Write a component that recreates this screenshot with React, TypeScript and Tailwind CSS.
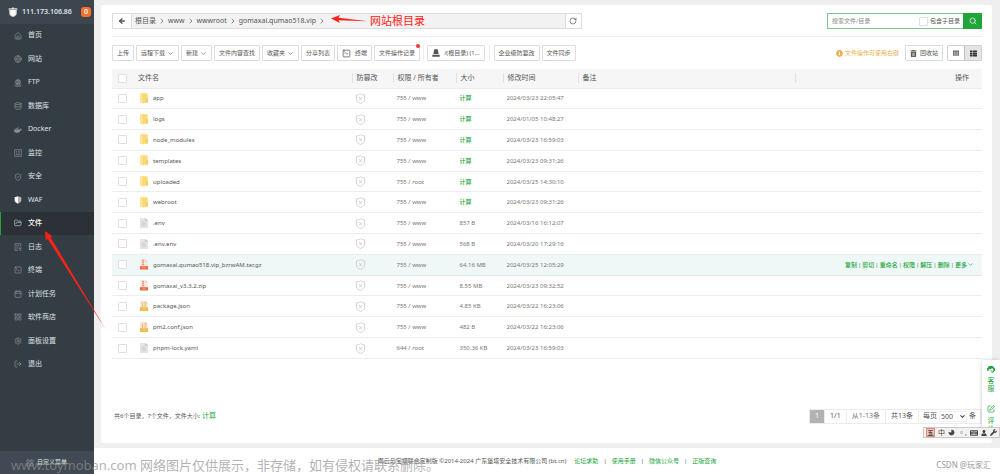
import React, { useState } from "react";
import clsx from "clsx";
import {
  ArrowLeft,
  Calendar,
  ChevronDown,
  ChevronRight,
  Database,
  FolderOpen,
  Globe,
  Home,
  LayoutGrid,
  LogOut,
  RotateCw,
  Search,
  Settings,
  ShieldCheck,
  SquarePen,
  SquareTerminal,
  Moon,
} from "lucide-react";
import {
  FaDocker,
  FaInfoCircle,
  FaKeyboard,
  FaTh,
  FaThList,
  FaTrashAlt,
  FaUser,
  FaWrench,
} from "react-icons/fa";

type FileKind = "folder" | "text" | "archive" | "json";

interface FileRow {
  name: string;
  kind: FileKind;
  owner: string;
  size?: string;
  time: string;
  active?: boolean;
}

const files: FileRow[] = [
  { name: "app", kind: "folder", owner: "755 / www", time: "2024/03/23 22:05:47" },
  { name: "logs", kind: "folder", owner: "755 / www", time: "2024/01/05 10:48:27" },
  { name: "node_modules", kind: "folder", owner: "755 / www", time: "2024/03/23 16:59:03" },
  { name: "templates", kind: "folder", owner: "755 / www", time: "2024/03/23 09:31:26" },
  { name: "uploaded", kind: "folder", owner: "755 / root", time: "2024/03/25 14:30:10" },
  { name: "webroot", kind: "folder", owner: "755 / www", time: "2024/03/23 09:31:26" },
  { name: ".env", kind: "text", owner: "755 / www", size: "857 B", time: "2024/03/16 16:12:07" },
  { name: ".env.env", kind: "text", owner: "755 / www", size: "568 B", time: "2024/03/20 17:29:16" },
  {
    name: "gomaxai.qumao518.vip_bzrwAM.tar.gz",
    kind: "archive",
    owner: "755 / www",
    size: "64.16 MB",
    time: "2024/03/25 12:05:29",
    active: true,
  },
  { name: "gomaxai_v3.3.2.zip", kind: "archive", owner: "755 / www", size: "8.55 MB", time: "2024/03/23 09:32:52" },
  { name: "package.json", kind: "json", owner: "755 / www", size: "4.85 KB", time: "2024/03/22 16:23:06" },
  { name: "pm2.conf.json", kind: "json", owner: "755 / www", size: "482 B", time: "2024/03/22 16:23:06" },
  { name: "pnpm-lock.yaml", kind: "text", owner: "644 / root", size: "350.36 KB", time: "2024/03/23 16:59:03" },
];

/* ---------- Icons ---------- */
const FtpIcon = () => (
  <svg viewBox="0 0 24 24" className="size-2" fill="none" stroke="currentColor" strokeWidth="2">
    <circle cx="12" cy="9" r="7.500" />
    <path d="M12 1v16M4 9h16M6 5h12M6 13h12M1 18h22M4 22h16" />
  </svg>
);

const MonitorIcon = () => (
  <svg viewBox="0 0 24 24" className="size-2" fill="none" stroke="currentColor" strokeWidth="2">
    <path d="M2 2h20v20H2zM6 7h3M12 7h6M6 12h3M12 12h6M6 17h12" />
  </svg>
);

const WafIcon = () => (
  <svg viewBox="0 0 24 24" className="size-2">
    <path d="M12 1 2 4v9c0 5 5 8 10 10z" fill="#fff" />
    <path d="m12 1 10 3v9c0 5-5 8-10 10z" fill="#aeb2b5" />
  </svg>
);

const LogIcon = () => (
  <svg viewBox="0 0 24 24" className="size-2" fill="none" stroke="currentColor" strokeWidth="2">
    <path d="M20 11V2H3v20h9M7 7h9M7 12h6M7 17h4M14 15h8M14 18h8M17 22h5" />
  </svg>
);

const LogoIcon = () => (
  <svg viewBox="0 0 24 24" className="size-[10px] shrink-0">
    <path d="M12 0 9 3 2 3 1 6l2 2v7c0 5 5 8 9 9 4-1 9-4 9-9V8l2-2-1-3-7 0z" fill="#d7dadc" />
    <path d="M12 6 6 8v7c0 3 3 5 6 6 3-1 6-3 6-6V8z" fill="#fff" />
    <path d="M2 6h20" stroke="#7d848a" strokeWidth="1.5" />
  </svg>
);

const GuardIcon = () => (
  <svg viewBox="0 0 24 24" className="size-[11px]" fill="none" stroke="#c8c8c8" strokeWidth="1.8">
    <path d="M12 1.500C9.500 3.500 6 4 3 4v9c0 5 3.500 7.500 9 10 5.500-2.500 9-5 9-10V4c-3 0-6.500-.5-9-2.500z" />
    <path d="m9 9 6 7m0-7-6 7" />
  </svg>
);

const DiskIcon = () => (
  <svg viewBox="0 0 24 24" className="mr-[2px] size-2" fill="currentColor">
    <path d="M7 1h10l3 14H4zM1 17h22v6H1z" />
  </svg>
);

const ServiceIcon = () => (
  <svg viewBox="0 0 24 24" className="mb-1 size-2 shrink-0" fill="currentColor">
    <path d="M12 2C6 2 2 6 2 10H0v7h5v-4c5 0 9-2 11-5 1 3 2 5 3 5v4c-1 2-3 3-6 3v3c5 0 8-2 9-6h2v-7h-2c0-4-4-8-10-8z" />
    <path d="M8 16c2 2 6 2 8 0" fill="none" stroke="currentColor" strokeWidth="2" />
  </svg>
);

const FileIcon = ({ kind }: { kind: FileKind }) => {
  if (kind === "folder") {
    return (
      <svg viewBox="0 0 24 33" className="h-[11px] w-2 shrink-0">
        <path d="M1 1h20a2 2 0 0 1 2 2v26H1z" fill="#f9d978" />
        <path d="M1 1l9 4v27L1 28z" fill="#ffe493" />
        <path d="M10 5v27" stroke="#efc04d" />
        <path d="M19 15h4v14h-4z" fill="#f3c653" />
      </svg>
    );
  }
  if (kind === "text") {
    return (
      <svg viewBox="0 0 24 30" className="h-[10px] w-2 shrink-0">
        <path d="M0 0h16l8 8v22H0z" fill="#e4e4e4" />
        <path d="M16 0v8h8z" fill="#bdbdbd" />
        <path d="M5 12h12M5 17h13M5 22h13" stroke="#c4c4c4" strokeWidth="2" />
      </svg>
    );
  }
  if (kind === "archive") {
    return (
      <svg viewBox="0 0 24 32" className="h-[11px] w-2 shrink-0">
        <path d="M2 0h14l7 7v14H2z" fill="#f3e6e1" />
        <path d="M16 0v7h7z" fill="#e8c9bf" />
        <path d="M9 2v18" stroke="#ee7350" strokeWidth="4" strokeDasharray="4 2" />
        <path d="M0 21h24v10H0z" fill="#f0683f" />
        <path d="M7 26h10" stroke="#f59a7d" strokeWidth="3" />
      </svg>
    );
  }
  return (
    <svg viewBox="0 0 24 30" className="h-[10px] w-2 shrink-0">
      <path d="M1 0h15l7 7v13H1z" fill="#f0e3c9" />
      <path d="M16 0v7h7z" fill="#d8c49a" />
      <path d="M9 6c-3 0 0 5-3 6 3 1 0 6 3 6M14 6c3 0 0 5 3 6-3 1 0 6-3 6" fill="none" stroke="#e3a940" strokeWidth="2" />
      <path d="M0 19h24v11H0z" fill="#f2b544" />
      <path d="M5 25h14" stroke="#f8d080" strokeWidth="3" />
    </svg>
  );
};

/* ---------- Sidebar ---------- */
const menu = [
  { label: "首页", icon: <Home className="size-2" /> },
  { label: "网站", icon: <Globe className="size-2" /> },
  { label: "FTP", icon: <FtpIcon /> },
  { label: "数据库", icon: <Database className="size-2" /> },
  { label: "Docker", icon: <FaDocker className="size-2" /> },
  { label: "监控", icon: <MonitorIcon /> },
  { label: "安全", icon: <ShieldCheck className="size-2" /> },
  { label: "WAF", icon: <WafIcon /> },
  { label: "文件", icon: <FolderOpen className="size-2" />, active: true },
  { label: "日志", icon: <LogIcon /> },
  { label: "终端", icon: <SquareTerminal className="size-2" /> },
  { label: "计划任务", icon: <Calendar className="size-2" /> },
  { label: "软件商店", icon: <LayoutGrid className="size-2" /> },
  { label: "面板设置", icon: <Settings className="size-2" /> },
  { label: "退出", icon: <LogOut className="size-2" /> },
];

const Sidebar = () => (
  <aside className="flex w-[94px] shrink-0 flex-col bg-[#353d44] text-[7px] text-[#dfe1e3]">
    <div className="flex h-6 items-center gap-1 bg-[#3d464f] pr-[3px] pl-2">
      <LogoIcon />
      <span className="flex-1 font-semibold">111.173.106.86</span>
      <span className="flex size-[10px] items-center justify-center rounded-[3px] bg-[#f8702a] font-semibold text-white">
        0
      </span>
    </div>
    <nav className="flex h-[352px] flex-col">
      {menu.map((item) => (
        <a
          key={item.label}
          href="#"
          className={clsx(
            "flex flex-1 items-center gap-[6px] border-l pl-[13px]",
            item.active ? "border-[#20a53a] bg-[#2c3138] font-medium text-white" : "border-transparent"
          )}
        >
          <span className={item.active ? "text-[#c9cccf]" : "text-[#8b9197]"}>{item.icon}</span>
          {item.label}
        </a>
      ))}
    </nav>
    <button className="mt-auto flex h-[23px] items-center gap-[3px] bg-[#414a54] pl-[26px] text-[6px]">
      <LayoutGrid className="size-2 text-[#8b9197]" />
      自定义菜单
    </button>
  </aside>
);

/* ---------- Toolbar ---------- */
const ToolButton = ({ children, className }: { children: React.ReactNode; className?: string }) => (
  <button
    className={clsx(
      "relative flex h-4 items-center gap-[2px] rounded-[1px] border border-[#dcdcdc] bg-white px-1 text-[6px] whitespace-nowrap",
      className
    )}
  >
    {children}
  </button>
);

const Checkbox = ({ label, id }: { label: string; id?: string }) => (
  <input
    id={id}
    type="checkbox"
    aria-label={label}
    className="block size-[9px] appearance-none rounded-[1px] border border-[#e0e0e0] bg-white"
  />
);

const crumbs = ["根目录", "www", "wwwroot", "gomaxai.qumao518.vip"];

const PathBar = () => (
  <div className="flex items-center justify-between border-b border-[#ededed] pb-[7px]">
    <div className="flex h-4 w-[54%] border border-[#dcdcdc] bg-[#f2f2f2]">
      <button aria-label="back" className="flex w-[19px] items-center justify-center border-r border-[#dcdcdc] bg-white">
        <ArrowLeft className="size-2" strokeWidth={4} />
      </button>
      <div className="flex flex-1 items-center pl-[3px] text-[7px]">
        {crumbs.map((crumb) => (
          <span key={crumb} className="flex items-center">
            <a href="#">{crumb}</a>
            <ChevronRight className="mx-[2px] size-2" />
          </span>
        ))}
      </div>
      <button aria-label="refresh" className="flex w-4 items-center justify-center border-l border-[#dcdcdc] bg-white">
        <RotateCw className="size-2" strokeWidth={2} />
      </button>
    </div>
    <div className="flex h-4 text-[6px]">
      <div className="flex w-[136px] items-center border border-r-0 border-[#7cc78b] pr-[3px] pl-1">
        <input
          aria-label="搜索文件/目录"
          placeholder="搜索文件/目录"
          className="min-w-0 flex-1 outline-none placeholder:text-[#888]"
        />
        <div className="flex items-center gap-[2px]">
          <Checkbox id="sub-dir" label="包含子目录" />
          <label htmlFor="sub-dir">包含子目录</label>
        </div>
      </div>
      <button aria-label="search" className="flex w-[19px] items-center justify-center bg-[#20a53a] text-white">
        <Search className="size-2" />
      </button>
    </div>
  </div>
);

const Toolbar = () => (
  <div className="flex items-center justify-between pt-2">
    <div className="flex items-center gap-[2px]">
      <ToolButton>上传</ToolButton>
      <ToolButton>
        远程下载
        <ChevronDown className="size-[7px]" />
      </ToolButton>
      <ToolButton>
        新建
        <ChevronDown className="size-[7px]" />
      </ToolButton>
      <ToolButton>文件内容查找</ToolButton>
      <ToolButton>
        收藏夹
        <ChevronDown className="size-[7px]" />
      </ToolButton>
      <ToolButton>分享列表</ToolButton>
      <ToolButton>
        <SquareTerminal className="mr-[2px] size-[9px]" />
        终端
      </ToolButton>
      <ToolButton>
        文件操作记录
        <span className="absolute -top-[2px] -right-px size-1 rounded-full bg-[#f33b3b]" />
      </ToolButton>
      <span className="mx-px h-4 border-l border-[#eee]" />
      <ToolButton>
        <DiskIcon />
        /(根目录) (1...
      </ToolButton>
      <span className="mx-[2px] h-4 border-l border-[#eee]" />
      <ToolButton>企业级防篡改</ToolButton>
      <ToolButton>文件同步</ToolButton>
    </div>
    <div className="flex items-center">
      <span className="mr-[6px] flex items-center gap-[2px] text-[6px] text-[#f0ad4e]">
        <FaInfoCircle className="size-[7px]" />
        文件操作可使用右键
      </span>
      <ToolButton className="mr-1">
        <FaTrashAlt className="mr-px size-[7px]" />
        回收站
      </ToolButton>
      <div className="flex h-4 overflow-hidden rounded-[1px] border border-[#d0d0d0]">
        <button aria-label="grid" className="flex w-4 items-center justify-center">
          <FaTh className="size-[6px]" />
        </button>
        <button
          aria-label="list"
          className="flex w-[17px] items-center justify-center border-l border-[#c0c0c0] bg-[#e4e4e4] text-[#333]"
        >
          <FaThList className="size-[7px]" />
        </button>
      </div>
    </div>
  </div>
);

/* ---------- File table ---------- */
const columns = ["防篡改", "权限 / 所有者", "大小", "修改时间", "备注"];
const actions = ["复制", "剪切", "重命名", "权限", "解压", "删除"];

const FileTable = () => (
  <table className="mt-2 h-[290px] w-full table-fixed border-collapse text-left">
    <colgroup>
      <col className="w-[22px]" />
      <col className="w-[25%]" />
      <col className="w-[41px]" />
      <col className="w-[63px]" />
      <col className="w-[47px]" />
      <col className="w-[75px]" />
      <col className="w-[25%]" />
      <col />
    </colgroup>
    <thead className="bg-[#f6f6f6] text-[7px] leading-[10px]">
      <tr className="h-[19px] border-b border-[#ebebeb]">
        <th className="pl-[6px]">
          <Checkbox label="全选" />
        </th>
        <th className="pl-1 font-normal">文件名</th>
        {columns.map((column) => (
          <th key={column} className="font-normal">
            <div className="border-l border-[#e2e2e2] pl-1 whitespace-nowrap">{column}</div>
          </th>
        ))}
        <th className="font-normal">
          <div className="border-l border-[#e2e2e2] pr-[13px] text-right">操作</div>
        </th>
      </tr>
    </thead>
    <tbody className="text-[6px] leading-[10px] text-[#777]">
      {files.map((file) => (
        <tr
          key={file.name}
          className={clsx("h-5 border-b", file.active ? "border-[#dcebe8] bg-[#eff8f6]" : "border-[#ededed]")}
        >
          <td className="pl-[6px]">
            <Checkbox label={file.name} />
          </td>
          <td className="pl-[6px]">
            <a href="#" className="flex items-center gap-[5px] text-[#555]">
              <FileIcon kind={file.kind} />
              {file.name}
            </a>
          </td>
          <td className="pl-[3px]">
            <GuardIcon />
          </td>
          <td className="pl-1">{file.owner}</td>
          <td className="pl-1 whitespace-nowrap">
            {file.size ?? (
              <a href="#" className="font-medium text-[#20a53a]">
                计算
              </a>
            )}
          </td>
          <td className="pl-1 whitespace-nowrap">{file.time}</td>
          <td />
          <td>
            {file.active && (
              <div className="flex justify-end gap-px pr-2 font-medium whitespace-nowrap">
                {actions.map((action) => (
                  <React.Fragment key={action}>
                    <a href="#" className="text-[#20a53a]">
                      {action}
                    </a>
                    <span>|</span>
                  </React.Fragment>
                ))}
                <a href="#" className="flex items-center text-[#20a53a]">
                  更多
                  <ChevronDown className="size-[7px]" />
                </a>
              </div>
            )}
          </td>
        </tr>
      ))}
    </tbody>
  </table>
);

const Pagination = () => {
  const [pageSize, setPageSize] = useState("500");

  return (
    <div className="mt-[50px] flex items-center justify-between pl-[2px]">
      <p className="text-[6px]">
        共6个目录，7个文件，文件大小:{" "}
        <a href="#" className="text-[7px] text-[#20a53a]">
          计算
        </a>
      </p>
      <div className="flex h-[15px] border border-[#ececec] text-[7px] whitespace-nowrap *:flex *:items-center *:border-r *:border-[#ececec]">
        <span className="bg-[#b2b2b2] px-[5px] text-white">1</span>
        <span className="px-[5px]">1/1</span>
        <span className="px-[5px] text-[#777]">从1-13条</span>
        <span className="px-[5px]">共13条</span>
        <label className="gap-[2px] px-1">
          每页
          <span className="relative flex items-center">
            <select
              value={pageSize}
              onChange={(e) => setPageSize(e.target.value)}
              className="h-[11px] w-7 appearance-none border border-[#eee] pl-px leading-[9px]"
            >
              <option>100</option>
              <option>500</option>
              <option>1000</option>
            </select>
            <ChevronDown className="pointer-events-none absolute right-px size-[7px]" strokeWidth={4} />
          </span>
          条
        </label>
      </div>
    </div>
  );
};

const footerLinks = ["论坛求助", "使用手册", "微信公众号", "正版查询"];

const Footer = () => (
  <footer className="flex h-[26px] items-center justify-center bg-white text-[6px]">
    <span className="mr-2">雨云与宝塔联合定制版 ©2014-2024 广东堡塔安全技术有限公司 (bt.cn)</span>
    {footerLinks.map((link, i) => (
      <span key={link} className="flex">
        {i > 0 && <span className="mx-[5px]">|</span>}
        <a href="#" className="text-[#20a53a]">
          {link}
        </a>
      </span>
    ))}
  </footer>
);

/* ---------- Floating items ---------- */
const SideService = () => (
  <div className="absolute top-[360px] right-0 flex h-[76px] w-[18px] flex-col items-center overflow-hidden rounded-l-[2px] bg-white pt-[5px] text-[7px] leading-[8px] text-[#20a53a] shadow-[0_0_4px_rgba(0,0,0,0.2)]">
    <ServiceIcon />
    <span>客</span>
    <span>服</span>
    <SquarePen className="mt-3 mb-1 size-2 shrink-0" />
    <span>评</span>
    <span>价</span>
  </div>
);

const InputMethodBar = () => (
  <div className="absolute top-[427px] right-0 flex h-[11px] w-[77px] items-center justify-between border border-[#c9c9c9] bg-[#f2f2f2] px-[2px] text-[7px] leading-none text-[#444]">
    <span className="flex size-[9px] items-center justify-center border border-[#e08c80] bg-[#f3c1b8] text-[6px] font-bold">五</span>
    <span>中</span>
    <Moon className="size-[7px] -scale-x-100" fill="currentColor" />
    <span>◦,</span>
    <FaKeyboard className="size-2" />
    <FaUser className="size-[6px]" />
    <FaWrench className="size-[7px]" />
  </div>
);

const Annotations = () => (
  <>
    <svg viewBox="0 0 400 340" className="pointer-events-none absolute top-0 left-0 h-[340px] w-[400px]" fill="#fb2318">
      <path d="M331 18.500 340 15l-1.500 2.800L368 21.200l-29.500-1 1.500 2.800z" />
      <path d="M45 231l7.500 5.500-2 .8L106 330 47.700 239l-1.900 1.200z" />
    </svg>
    <span className="absolute top-[13px] left-[370px] text-[11px] leading-4 text-[#fb2318]">网站根目录</span>
    <span className="absolute top-[456px] left-[11px] text-[13px] leading-[18px] whitespace-nowrap text-[#8f8f8f]/70">
      www.toymoban.com 网络图片仅供展示，非存储，如有侵权请联系删除。
    </span>
    <span className="absolute right-[9px] bottom-[3px] text-[8px] leading-3 text-[#999]">CSDN @玩家汇</span>
  </>
);

export default function App() {
  return (
    <div className="relative flex min-h-screen overflow-hidden font-['Noto_Sans','Noto_Sans_CJK_SC',sans-serif] text-[#555]">
      <Sidebar />
      <div className="flex min-w-0 flex-1 flex-col bg-[#efefef]">
        <main className="mt-[5px] mr-2 mb-[5px] ml-[7px] flex-1 rounded-[2px] bg-white pt-2 pr-[10px] pl-[11px]">
          <PathBar />
          <Toolbar />
          <FileTable />
          <Pagination />
        </main>
        <Footer />
      </div>
      <SideService />
      <InputMethodBar />
      <Annotations />
    </div>
  );
}
